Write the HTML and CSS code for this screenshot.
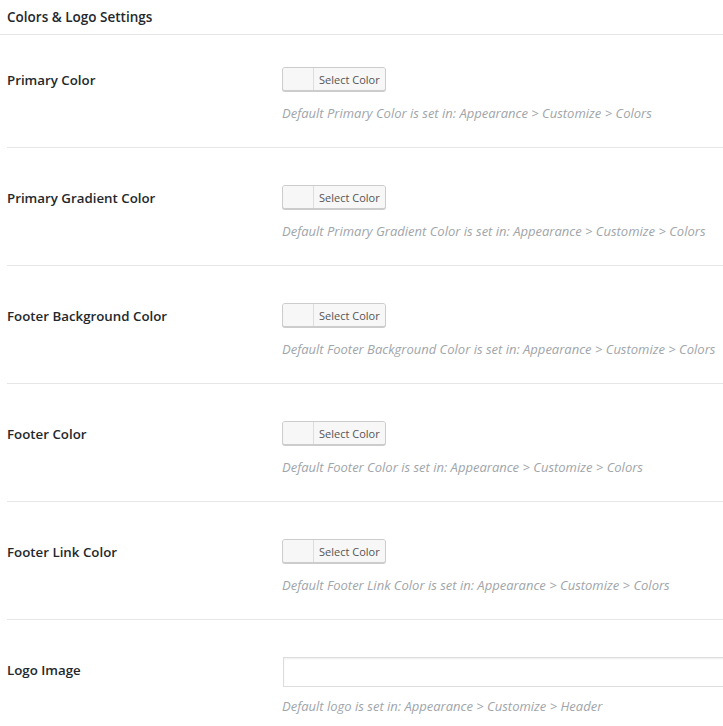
FILE: index.html
```html
<!DOCTYPE html>
<html>
<head>
<meta charset="utf-8">
<link rel="stylesheet" href="styles.css">
</head>
<body>
<div class="panel">
  <h2 class="panel-title">Colors &amp; Logo Settings</h2>
  <div class="rows">
    <div class="row first">
      <div class="label">Primary Color</div>
      <div class="field">
        <button class="color-btn"><span class="swatch"></span><span class="btn-text">Select Color</span></button>
        <p class="desc">Default Primary Color is set in: Appearance &gt; Customize &gt; Colors</p>
      </div>
    </div>
    <div class="row">
      <div class="label">Primary Gradient Color</div>
      <div class="field">
        <button class="color-btn"><span class="swatch"></span><span class="btn-text">Select Color</span></button>
        <p class="desc">Default Primary Gradient Color is set in: Appearance &gt; Customize &gt; Colors</p>
      </div>
    </div>
    <div class="row">
      <div class="label">Footer Background Color</div>
      <div class="field">
        <button class="color-btn"><span class="swatch"></span><span class="btn-text">Select Color</span></button>
        <p class="desc">Default Footer Background Color is set in: Appearance &gt; Customize &gt; Colors</p>
      </div>
    </div>
    <div class="row">
      <div class="label">Footer Color</div>
      <div class="field">
        <button class="color-btn"><span class="swatch"></span><span class="btn-text">Select Color</span></button>
        <p class="desc">Default Footer Color is set in: Appearance &gt; Customize &gt; Colors</p>
      </div>
    </div>
    <div class="row">
      <div class="label">Footer Link Color</div>
      <div class="field">
        <button class="color-btn"><span class="swatch"></span><span class="btn-text">Select Color</span></button>
        <p class="desc">Default Footer Link Color is set in: Appearance &gt; Customize &gt; Colors</p>
      </div>
    </div>
    <div class="row last">
      <div class="label">Logo Image</div>
      <div class="field">
        <input class="text-input" type="text">
        <p class="desc logo-desc">Default logo is set in: Appearance &gt; Customize &gt; Header</p>
      </div>
    </div>
  </div>
</div>
</body>
</html>
```
FILE: styles.css
```css
html, body {
  margin: 0;
  padding: 0;
  background: #fff;
  overflow: hidden;
}
body {
  font-family: "Open Sans", "Noto Sans", sans-serif;
  color: #23282d;
}
.panel {
  width: 723px;
}
.panel-title {
  margin: 0;
  height: 34px;
  line-height: 34px;
  padding-left: 7px;
  font-size: 13.5px;
  font-weight: 600;
  color: #23282d;
  border-bottom: 1px solid #e5e5e5;
}
.rows {
  padding-left: 7px;
}
.row {
  display: flex;
  border-bottom: 1px solid #e6e6e6;
  padding-top: 6px;
}
.row.first {
  padding-top: 1px;
}
.row.last {
  border-bottom: none;
}
.label {
  width: 275px;
  flex: none;
  padding-top: 32px;
  line-height: 24px;
  font-size: 13.3px;
  font-weight: 600;
  color: #23282d;
}
.field {
  flex: 1;
  padding-top: 31px;
  padding-bottom: 25px;
  min-width: 0;
}
.color-btn {
  display: flex;
  align-items: stretch;
  height: 24px;
  padding: 0;
  margin: 0;
  border: 1px solid #ccc;
  border-radius: 3px;
  background: #f7f7f7;
  box-shadow: 0 1px 0 #ccc;
  cursor: pointer;
  font-family: inherit;
}
.swatch {
  width: 30px;
  border-right: 1px solid #ddd;
  background: #f7f7f7;
  border-radius: 2px 0 0 2px;
}
.btn-text {
  display: flex;
  align-items: center;
  padding: 0 5px 0 5px;
  font-size: 11px;
  color: #555;
  background: #f7f7f7;
  border-radius: 0 2px 2px 0;
}
.desc {
  margin: 13px 0 0 0;
  line-height: 18px;
  font-size: 13px;
  font-style: italic;
  color: #a0a5aa;
  white-space: nowrap;
}
.text-input {
  display: block;
  box-sizing: border-box;
  width: 460px;
  height: 30px;
  margin: 0 0 0 1px;
  border: 1px solid #ddd;
  box-shadow: inset 0 1px 2px rgba(0,0,0,0.07);
  background: #fff;
  outline: none;
}
.logo-desc {
  margin-top: 10px;
}
```
